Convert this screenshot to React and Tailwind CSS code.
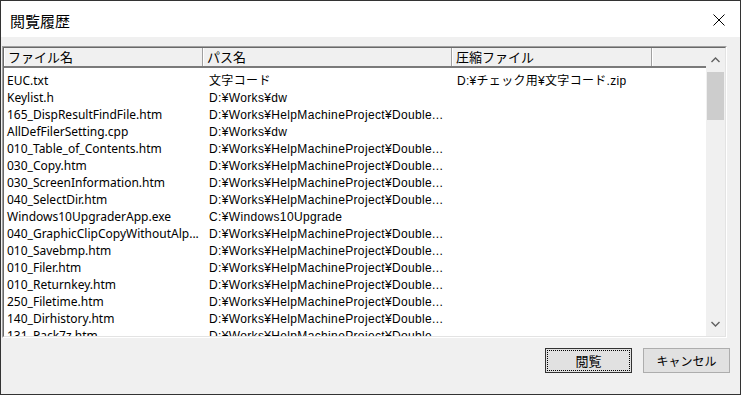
import React from "react";

const rows = [
  ["EUC.txt", "文字コード", "D:¥チェック用¥文字コード.zip"],
  ["Keylist.h", "D:¥Works¥dw", ""],
  ["165_DispResultFindFile.htm", "D:¥Works¥HelpMachineProject¥Double...", ""],
  ["AllDefFilerSetting.cpp", "D:¥Works¥dw", ""],
  ["010_Table_of_Contents.htm", "D:¥Works¥HelpMachineProject¥Double...", ""],
  ["030_Copy.htm", "D:¥Works¥HelpMachineProject¥Double...", ""],
  ["030_ScreenInformation.htm", "D:¥Works¥HelpMachineProject¥Double...", ""],
  ["040_SelectDir.htm", "D:¥Works¥HelpMachineProject¥Double...", ""],
  ["Windows10UpgraderApp.exe", "C:¥Windows10Upgrade", ""],
  ["040_GraphicClipCopyWithoutAlp...", "D:¥Works¥HelpMachineProject¥Double...", ""],
  ["010_Savebmp.htm", "D:¥Works¥HelpMachineProject¥Double...", ""],
  ["010_Filer.htm", "D:¥Works¥HelpMachineProject¥Double...", ""],
  ["010_Returnkey.htm", "D:¥Works¥HelpMachineProject¥Double...", ""],
  ["250_Filetime.htm", "D:¥Works¥HelpMachineProject¥Double...", ""],
  ["140_Dirhistory.htm", "D:¥Works¥HelpMachineProject¥Double...", ""],
  ["131_Pack7z.htm", "D:¥Works¥HelpMachineProject¥Double...", ""],
];

const jp = { fontFamily: '"Liberation Sans", "Noto Sans CJK JP", sans-serif' };

function HeaderCell({ w, children }) {
  return (
    <div
      className={`${w} h-full shrink-0 bg-[#f0f0f0] border-l border-l-white border-r border-r-[#a0a0a0] pl-[3px] flex items-center text-[13px] text-black`}
      style={{ fontFamily: '"Noto Sans CJK JP", sans-serif' }}
    >
      {children}
    </div>
  );
}

export default function App() {
  return (
    <div className="w-[741px] h-[395px] border border-[#333333] flex flex-col bg-[#f0f0f0] overflow-hidden">
      {/* Title bar */}
      <div className="h-[36px] shrink-0 bg-white flex items-center justify-between pl-[9px] pr-[15px]">
        <span
          className="text-[15px] text-black leading-none mt-[2px]"
          style={{ fontFamily: '"Noto Sans CJK JP", sans-serif' }}
        >
          閲覧履歴
        </span>
        <svg width="12" height="12" viewBox="0 0 12 12" className="mt-[2px]">
          <path d="M0.5 0.5 L11.5 11.5 M11.5 0.5 L0.5 11.5" stroke="#000" strokeWidth="1" fill="none" />
        </svg>
      </div>

      {/* Body */}
      <div className="flex-1 flex flex-col pt-[9px] pl-[1px]">
        {/* List view */}
        <div className="w-[725px] h-[292px] border border-t-[#a0a0a0] border-l-[#a0a0a0] border-b-white border-r-white">
          <div className="w-full h-full border border-t-[#696969] border-l-[#696969] border-b-[#e3e3e3] border-r-[#e3e3e3] bg-white flex">
            <div className="flex-1 flex flex-col overflow-hidden">
              <div className="h-[20px] shrink-0 flex border-b-2 border-b-[#7a7a7a]">
                <HeaderCell w="w-[199px]">ファイル名</HeaderCell>
                <HeaderCell w="w-[249px]">パス名</HeaderCell>
                <HeaderCell w="w-[200px]">圧縮ファイル</HeaderCell>
                <div className="flex-1 h-full bg-[#f0f0f0] border-l border-l-white" />
              </div>
              <div className="flex-1 overflow-hidden pt-[4px]">
                {rows.map((r, i) => (
                  <div key={i} className="h-[17px] flex items-center text-[12px] text-black whitespace-nowrap">
                    <div
                      className="w-[199px] shrink-0 pl-[3px] overflow-hidden"
                      style={{ fontFamily: '"Noto Sans", "Noto Sans CJK JP", sans-serif' }}
                    >
                      {r[0]}
                    </div>
                    <div className="w-[249px] shrink-0 pl-[6px] overflow-hidden tracking-[0.35px]" style={jp}>
                      {r[1]}
                    </div>
                    <div className="w-[200px] shrink-0 pl-[5px] overflow-hidden tracking-[0.3px]" style={jp}>
                      {r[2]}
                    </div>
                  </div>
                ))}
              </div>
            </div>
            {/* Scrollbar */}
            <div className="w-[19px] shrink-0 bg-[#f0f0f0] flex flex-col">
              <div className="h-[24px] flex items-center justify-center">
                <svg width="9" height="6" viewBox="0 0 9 6">
                  <path d="M0.5 5 L4.5 1 L8.5 5" stroke="#606060" strokeWidth="1.4" fill="none" />
                </svg>
              </div>
              <div className="h-[48px] mx-[1px] bg-[#cdcdcd]" />
              <div className="flex-1" />
              <div className="h-[24px] flex items-center justify-center">
                <svg width="9" height="6" viewBox="0 0 9 6">
                  <path d="M0.5 1 L4.5 5 L8.5 1" stroke="#606060" strokeWidth="1.4" fill="none" />
                </svg>
              </div>
            </div>
          </div>
        </div>

        {/* Buttons */}
        <div className="flex justify-end gap-[11px] mt-[10px] pr-[10px]">
          <button
            className="w-[87px] h-[25px] bg-[#e1e1e1] border border-[#333333] flex items-center justify-center p-[1px]"
          >
            <span
              className="w-full h-full border border-dotted border-black flex items-center justify-center text-[13px] text-black"
              style={{ fontFamily: '"Noto Sans CJK JP", sans-serif' }}
            >
              閲覧
            </span>
          </button>
          <button
            className="w-[87px] h-[25px] bg-[#e1e1e1] border border-[#adadad] flex items-center justify-center text-[12px] text-black"
            style={{ fontFamily: '"Noto Sans CJK JP", sans-serif' }}
          >
            キャンセル
          </button>
        </div>
      </div>
    </div>
  );
}
